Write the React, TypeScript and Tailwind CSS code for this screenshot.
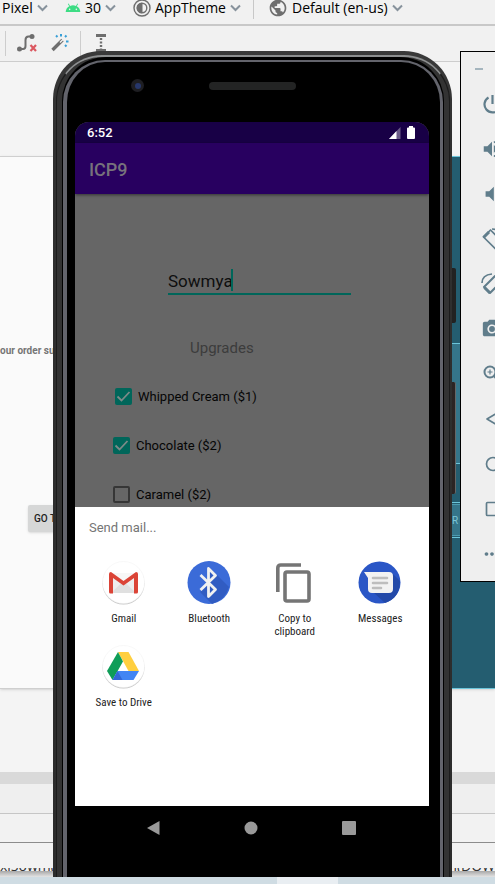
import type { ReactNode } from "react";
import {
  MdAndroid,
  MdMoreHoriz,
  MdPhotoCamera,
  MdPublic,
  MdVolumeDown,
  MdVolumeUp,
} from "react-icons/md";

function Chevron() {
  return (
    <svg viewBox="0 0 11 8" className="h-2 w-[11px] shrink-0" fill="none" stroke="#87929c" strokeWidth="2">
      <path d="M1 1.5 5.5 6 10 1.5" />
    </svg>
  );
}

function ToolbarMenu({ label, icon, className }: { label: string; icon?: ReactNode; className?: string }) {
  return (
    <button type="button" className={"flex h-4 shrink-0 items-center gap-1 whitespace-nowrap " + (className ?? "")}>
      {icon}
      <span>{label}</span>
      <Chevron />
    </button>
  );
}

function IdeToolbars() {
  return (
    <header className="text-black">
      <div className="flex h-[26px] items-start border-b-2 border-[#c8c8c8] bg-[#f1f1f1] pl-0.5 font-['Open_Sans','Noto_Sans',sans-serif] text-sm leading-4">
        <ToolbarMenu label="Pixel" className="w-[63px]" />
        <ToolbarMenu label="30" className="w-[68px]" icon={<MdAndroid className="h-4 w-4 shrink-0 text-[#3ddc84]" />} />
        <ToolbarMenu
          label="AppTheme"
          className="w-[120px]"
          icon={
            <svg viewBox="0 0 18 18" className="h-[18px] w-[18px] shrink-0" fill="none" stroke="#6e6e6e">
              <circle cx="9" cy="9" r="8" strokeWidth="1.4" />
              <circle cx="9" cy="9" r="4.8" strokeWidth="1.4" />
              <path d="M9 4.2a4.8 4.8 0 0 0 0 9.6z" fill="#6e6e6e" />
            </svg>
          }
        />
        <span className="mr-3.5 h-[19px] w-px bg-[#c8c8c8]" />
        <ToolbarMenu label="Default (en-us)" icon={<MdPublic className="h-5 w-5 shrink-0 text-[#6e6e6e]" />} />
      </div>
      <div className="flex h-9 items-start border-b border-[#cdcdcd] bg-[#f1f1f1] pt-[5px] pl-[5px]">
        <span className="h-[25px] w-px bg-[#cdcdcd]" />
        <button type="button" aria-label="Clear constraints" className="ml-[11px] h-6 w-5">
          <svg viewBox="0 0 20 24" className="h-6 w-5" fill="none">
            <circle cx="2.5" cy="18" r="2.5" fill="#6e6e6e" />
            <circle cx="15" cy="5.500" r="2.500" fill="#6e6e6e" />
            <path d="M2.500 18H6q2.500 0 2.500-3V9q0-3.500 3-3.500h3" stroke="#6e6e6e" strokeWidth="2" />
            <path d="m13.500 14 5.500 6m0-6-5.500 6" stroke="#db5860" strokeWidth="2.200" />
          </svg>
        </button>
        <button type="button" aria-label="Infer constraints" className="ml-3.5 h-6 w-[18px]">
          <svg viewBox="0 0 18 24" className="h-6 w-[18px]" fill="none">
            <path d="m1.500 19 10-10" stroke="#6e6e6e" strokeWidth="3.400" />
            <path d="m9 11.500 3-3" stroke="#f1f1f1" strokeWidth="1.400" />
            <path d="M5 4.500 6.500 6M10 3v2.500M15.500 4.500 14 6M15 10.500h2.500M14 14l1.500 1.500" stroke="#389fd6" strokeWidth="2" />
          </svg>
        </button>
        <span className="ml-[11px] h-[25px] w-px bg-[#cdcdcd]" />
        <button type="button" aria-label="Default margins" className="ml-[15px] h-6 w-2.5">
          <svg viewBox="0 0 10 24" className="h-6 w-2.5" stroke="#6e6e6e">
            <path d="M0 4.500h10M0 19.500h10" strokeWidth="3" />
            <path d="M5 7v11" strokeWidth="2.400" strokeDasharray="2 1.500" />
          </svg>
        </button>
      </div>
    </header>
  );
}

function DesignCanvas() {
  return (
    <main className="flex flex-1 justify-between overflow-hidden bg-[#f4f4f4] pt-[94px] pb-[83px]">
      <section className="w-[120px] border-y border-[#cfcfcf] bg-[#fafafa] pt-[186px] shadow-sm">
        <p className="text-[10px] leading-4 font-bold whitespace-nowrap text-[#757575]">our order summary</p>
        <button
          type="button"
          className="mt-[146px] ml-7 h-[27px] rounded-xs bg-[#d6d7d7] px-1.5 text-[10px] font-medium whitespace-nowrap text-[#222] shadow-sm"
        >
          GO TO ORDER
        </button>
      </section>
      <section className="flex w-12 flex-col border-y border-[#6cc5da] bg-[#245d70] text-[10px] text-[#7cc6d8] shadow-sm">
        <div className="h-[186px]" />
        <div className="h-[121px] border-y border-[#6cc5da] bg-[#35758a]" />
        <div className="h-[38px]" />
        <div className="h-9 border-y border-[#6cc5da] py-px">
          <div className="flex h-full items-center border-y border-[#4d9bb0] bg-[#35758a] pl-[5px]">R</div>
        </div>
      </section>
    </main>
  );
}

function IdeFooter() {
  return (
    <footer>
      <div className="h-3 bg-[#d9d9d9]" />
      <div className="h-[30px] border-b border-[#c6c6c6] bg-[#efefef]" />
      <div className="h-[29px] border-b border-[#8c8c8c] bg-[#f2f2f2]" />
      <div className="flex h-7 items-end justify-between bg-[#f2f2f2]">
        <div className="flex h-[3px] w-full items-end justify-between overflow-hidden font-['Open_Sans',sans-serif] text-sm leading-[10px] text-[#333]">
          <span>xiSowm(</span>
          <span>m(DOW</span>
        </div>
      </div>
      <div className="h-1.5 bg-linear-to-b from-[#a8a8a8] to-[#e4e4e4]" />
      <div className="flex h-[7px] bg-[#cfdce3]">
        <div className="w-[277px]" />
        <div className="w-[61px] bg-[#e9eef2]" />
      </div>
    </footer>
  );
}

function Upgrade({ label, checked, className }: { label: string; checked?: boolean; className: string }) {
  return (
    <label className={"flex h-[49px] items-center gap-1.5 text-[13px] text-[#050505] " + className}>
      <span className="grid h-[17px] w-[17px] place-items-center">
        <input
          type="checkbox"
          defaultChecked={checked}
          className="peer col-start-1 row-start-1 h-[17px] w-[17px] appearance-none rounded-xs border-2 border-[#363636] checked:border-0 checked:bg-[#00665a]"
        />
        <svg
          viewBox="0 0 17 17"
          className="pointer-events-none col-start-1 row-start-1 hidden h-[17px] w-[17px] peer-checked:block"
          fill="none"
          stroke="#7d8a88"
          strokeWidth="1.800"
        >
          <path d="m2.500 8.500 4 4 8-8.500" />
        </svg>
      </span>
      {label}
    </label>
  );
}

function GmailIcon() {
  return (
    <svg viewBox="0 0 44 44" className="h-11 w-11">
      <circle cx="21.500" cy="22.500" r="21" fill="#c4c4c4" />
      <circle cx="21.500" cy="21.500" r="21" fill="#ffffff" stroke="#f0f0f0" strokeWidth=".5" />
      <path d="M9 12h25v20H9z" fill="#eeeeee" />
      <path d="m9 32 12.500-12L34 32z" fill="#e0e0e0" />
      <path d="M10 12h23L21.500 21z" fill="#f7f7f7" />
      <path d="M7 13q0-2 2-2l12.500 9L34 11q2 0 2 2v18q0 1.500-1.500 1.500H32V17l-10.500 7.500L11 17v15.500H8.500Q7 32.500 7 31z" fill="#db4437" />
    </svg>
  );
}

function BluetoothIcon() {
  return (
    <svg viewBox="0 0 44 44" className="h-11 w-11">
      <circle cx="22" cy="21.500" r="21.500" fill="#3b6bd8" />
      <path d="m22 6 20 20q-4 13-17 17L13 31l8-7-8-9 8 6z" fill="#315cc2" />
      <path d="m13.500 14 15 14.500-7 7v-28l7 7-15 14.500" fill="none" stroke="#f1f1f1" strokeWidth="2.800" strokeLinejoin="round" />
    </svg>
  );
}

function CopyIcon() {
  return (
    <svg viewBox="0 0 44 44" className="h-11 w-11" fill="none" stroke="#757575" strokeWidth="3.600">
      <path d="M4.800 31V7q0-3 3-3H28" />
      <rect x="12" y="11" width="24" height="29" rx="2" />
    </svg>
  );
}

function MessagesIcon() {
  return (
    <svg viewBox="0 0 44 44" className="h-11 w-11">
      <circle cx="21.500" cy="21.500" r="21" fill="#2a56c6" />
      <path d="m34 12 8 8q0 17-15 22L15 31z" fill="#2349a8" />
      <path d="M6 11h25q4 0 4 4v13q0 4-4 4H14q-4 0-4-4V17z" fill="#f2f2f2" />
      <path d="M15 17h14M15 22h14M15 27h8" stroke="#bdbdbd" strokeWidth="2.600" strokeLinecap="round" />
    </svg>
  );
}

function DriveIcon() {
  return (
    <svg viewBox="0 0 44 44" className="h-11 w-11">
      <circle cx="21.500" cy="22.500" r="21" fill="#c4c4c4" />
      <circle cx="21.500" cy="21.500" r="21" fill="#ffffff" stroke="#f0f0f0" strokeWidth=".5" />
      <path d="M16 7h10.500L37 26H26.500z" fill="#ffcf3f" />
      <path d="m16 7 5 9.500L10.500 35 5 26z" fill="#0f9d58" />
      <path d="M15.500 26H37l-5.500 9h-21z" fill="#4285f4" />
      <path d="m15.500 26 5 9h-10z" fill="#3367d6" />
    </svg>
  );
}

const targets = [
  { label: "Gmail", icon: <GmailIcon /> },
  { label: "Bluetooth", icon: <BluetoothIcon /> },
  { label: "Copy to clipboard", icon: <CopyIcon /> },
  { label: "Messages", icon: <MessagesIcon /> },
  { label: "Save to Drive", icon: <DriveIcon /> },
];

function ShareSheet() {
  return (
    <section className="h-[299px] shrink-0 bg-white px-[6px] pt-3">
      <h2 className="pl-2 text-[13px] leading-[18px] text-[#757575]">Send mail...</h2>
      <div className="mt-6 grid grid-cols-4">
        {targets.map((target) => (
          <button key={target.label} type="button" className="flex h-[84px] flex-col items-center gap-[7px] text-[#222]">
            {target.icon}
            <span className="w-16 text-center font-['Roboto_Condensed','Liberation_Sans_Narrow',sans-serif] text-[11px] leading-[13px]">
              {target.label}
            </span>
          </button>
        ))}
      </div>
    </section>
  );
}

function PhoneScreen() {
  return (
    <div className="flex min-h-0 flex-1 flex-col overflow-hidden rounded-t-[14px] bg-[#666]">
      <div className="flex h-[21px] shrink-0 items-center justify-between bg-[#180046] pr-3.5 pl-3 text-[13px] font-medium text-white">
        <span>6:52</span>
        <span className="flex items-center gap-1.5">
          <svg viewBox="0 0 12 12" className="h-3 w-3">
            <path d="M11.500 0v12H0z" fill="#6a5b88" />
            <path d="M7.500 4v8H0z" fill="#ffffff" />
          </svg>
          <svg viewBox="0 0 8 13" className="h-[13px] w-2" fill="#ffffff">
            <path d="M2 0h4v1.500h1q1 0 1 1V12q0 1-1 1H1q-1 0-1-1V2.500q0-1 1-1h1z" />
          </svg>
        </span>
      </div>
      <h1 className="z-10 flex h-[51px] shrink-0 items-center bg-[#280060] pt-0.5 pl-3.5 text-lg font-medium text-[#77737c] shadow-[0_1px_3px_rgba(0,0,0,0.5)]">
        ICP9
      </h1>
      <div className="min-h-0 flex-1 overflow-hidden">
        <div className="mt-[74px] ml-[93px] flex h-[27px] w-[183px] items-start border-b-2 border-[#00665a]">
          <input
            type="text"
            aria-label="Name"
            defaultValue="Sowmya"
            className="h-[25px] w-[63px] bg-transparent pt-0.5 text-[17px] text-[#0e0e0e] outline-none"
          />
          <span className="mt-px h-[22px] w-0.5 bg-[#00665a]" />
        </div>
        <p className="mt-[43px] ml-[115px] text-[15px] leading-5 text-[#3c3c3c]">Upgrades</p>
        <div className="mt-3.5">
          <Upgrade label="Whipped Cream ($1)" checked className="ml-10" />
          <Upgrade label="Chocolate ($2)" checked className="ml-[38px]" />
          <Upgrade label="Caramel ($2)" className="ml-[38px]" />
        </div>
      </div>
      <ShareSheet />
    </div>
  );
}

function Phone() {
  return (
    <div className="absolute top-[51px] right-[43px] bottom-[7px] left-[53px] flex rounded-t-[48px] bg-linear-to-b from-[#3a3a3a] via-[#303030] via-10% to-[#2c2c2c]">
      <span className="absolute top-[217px] -right-1 h-[55px] w-1 rounded-r-xs bg-[#222]" />
      <span className="absolute top-[331px] -right-1 h-[112px] w-1 rounded-r-xs border-r border-[#666] bg-[#2b2424]" />
      <div className="mt-1 mr-0.5 ml-[3px] flex flex-1 rounded-t-[46px] border-t-2 border-r border-l border-t-[#8d8f90] border-r-[#1c1c1c] border-l-[#1c1c1c] bg-[#333]">
        <div className="mr-[5px] ml-[5px] flex flex-1 rounded-t-[44px] bg-black px-px pt-[3px]">
          <div className="flex min-w-0 flex-1 flex-col rounded-t-[42px] border-t-2 border-r-3 border-l-4 border-[#63646c] bg-black pr-[11px] pl-2">
            <div className="grid h-[60px] shrink-0 grid-cols-3 items-start pt-[17px]">
              <span className="ml-14 grid h-[13px] w-[13px] place-items-center rounded-full bg-[#1e1e22]">
                <span className="h-1.5 w-1.5 rounded-full bg-[#27376b]" />
              </span>
              <span className="mt-[3px] h-2 w-[87px] justify-self-center rounded-full bg-[#232424]" />
            </div>
            <PhoneScreen />
            <nav className="flex h-[71px] shrink-0 items-start justify-between pt-[14px] pr-[72px] pl-[70px] text-[#999]">
              <button type="button" aria-label="Back">
                <svg viewBox="0 0 16 16" className="h-4 w-4" fill="currentColor">
                  <path d="M14.500 1v14L2 8z" />
                </svg>
              </button>
              <button type="button" aria-label="Home">
                <svg viewBox="0 0 16 16" className="h-4 w-4" fill="currentColor">
                  <circle cx="8" cy="8" r="6.500" />
                </svg>
              </button>
              <button type="button" aria-label="Overview">
                <svg viewBox="0 0 16 16" className="h-4 w-4" fill="currentColor">
                  <rect x="1" y="1" width="14" height="14" rx="1" />
                </svg>
              </button>
            </nav>
          </div>
        </div>
      </div>
    </div>
  );
}

function LineIcon({ children }: { children: ReactNode }) {
  return (
    <svg viewBox="0 0 22 22" fill="none" stroke="currentColor" strokeWidth="1.700" strokeLinejoin="round">
      {children}
    </svg>
  );
}

const controls = [
  {
    label: "Power",
    icon: (
      <LineIcon>
        <path d="M7.500 4.500a8 8 0 1 0 8 0M11.500 2v9" strokeWidth="2.200" />
      </LineIcon>
    ),
  },
  { label: "Volume up", icon: <MdVolumeUp /> },
  { label: "Volume down", icon: <MdVolumeDown /> },
  {
    label: "Rotate left",
    icon: (
      <LineIcon>
        <path d="m2.500 9 7-7 12 12-7 7z" />
        <path d="M2.500 9.500 8 4" strokeWidth="3" />
        <path d="M11 1q8 0 10 8" />
      </LineIcon>
    ),
  },
  {
    label: "Rotate right",
    icon: (
      <LineIcon>
        <path d="m3 14 11-11 6 6L9 20z" strokeWidth="2" />
        <path d="m3.500 14.500 5.500 5.500" strokeWidth="3" />
        <path d="M1 10q0-8 10-9" />
      </LineIcon>
    ),
  },
  { label: "Take screenshot", icon: <MdPhotoCamera /> },
  {
    label: "Zoom",
    icon: (
      <LineIcon>
        <circle cx="9" cy="9" r="5.500" strokeWidth="2" />
        <path d="M9 6.500v5M6.500 9h5" strokeWidth="1.200" />
        <path d="m13 13 6 6" strokeWidth="2.400" />
      </LineIcon>
    ),
  },
  {
    label: "Back",
    icon: (
      <LineIcon>
        <path d="M18 4v14L6 11z" />
      </LineIcon>
    ),
  },
  {
    label: "Home",
    icon: (
      <LineIcon>
        <circle cx="12" cy="11" r="6.500" />
      </LineIcon>
    ),
  },
  {
    label: "Overview",
    icon: (
      <LineIcon>
        <rect x="5.500" y="4.500" width="13" height="13" rx="1" />
      </LineIcon>
    ),
  },
  { label: "More", icon: <MdMoreHoriz /> },
];

function EmulatorControls() {
  return (
    <aside className="absolute top-[51px] right-0 w-[35px] overflow-hidden border-y border-l border-black bg-[#efefef] text-[#607d8b]">
      <div className="flex h-[29px] items-end pb-[11px] pl-3.5">
        <button type="button" aria-label="Minimize" className="h-0.5 w-2 bg-[#a5b5be]" />
      </div>
      <div className="flex h-[500px] flex-col pl-5">
        {controls.map((control) => (
          <button
            key={control.label}
            type="button"
            aria-label={control.label}
            className="flex h-[45px] w-[22px] shrink-0 items-center [&>svg]:h-[22px] [&>svg]:w-[22px]"
          >
            {control.icon}
          </button>
        ))}
      </div>
    </aside>
  );
}

export default function App() {
  return (
    <div className="relative flex h-screen flex-col overflow-hidden bg-[#f4f4f4] font-['Roboto',sans-serif]">
      <IdeToolbars />
      <DesignCanvas />
      <IdeFooter />
      <Phone />
      <EmulatorControls />
    </div>
  );
}
